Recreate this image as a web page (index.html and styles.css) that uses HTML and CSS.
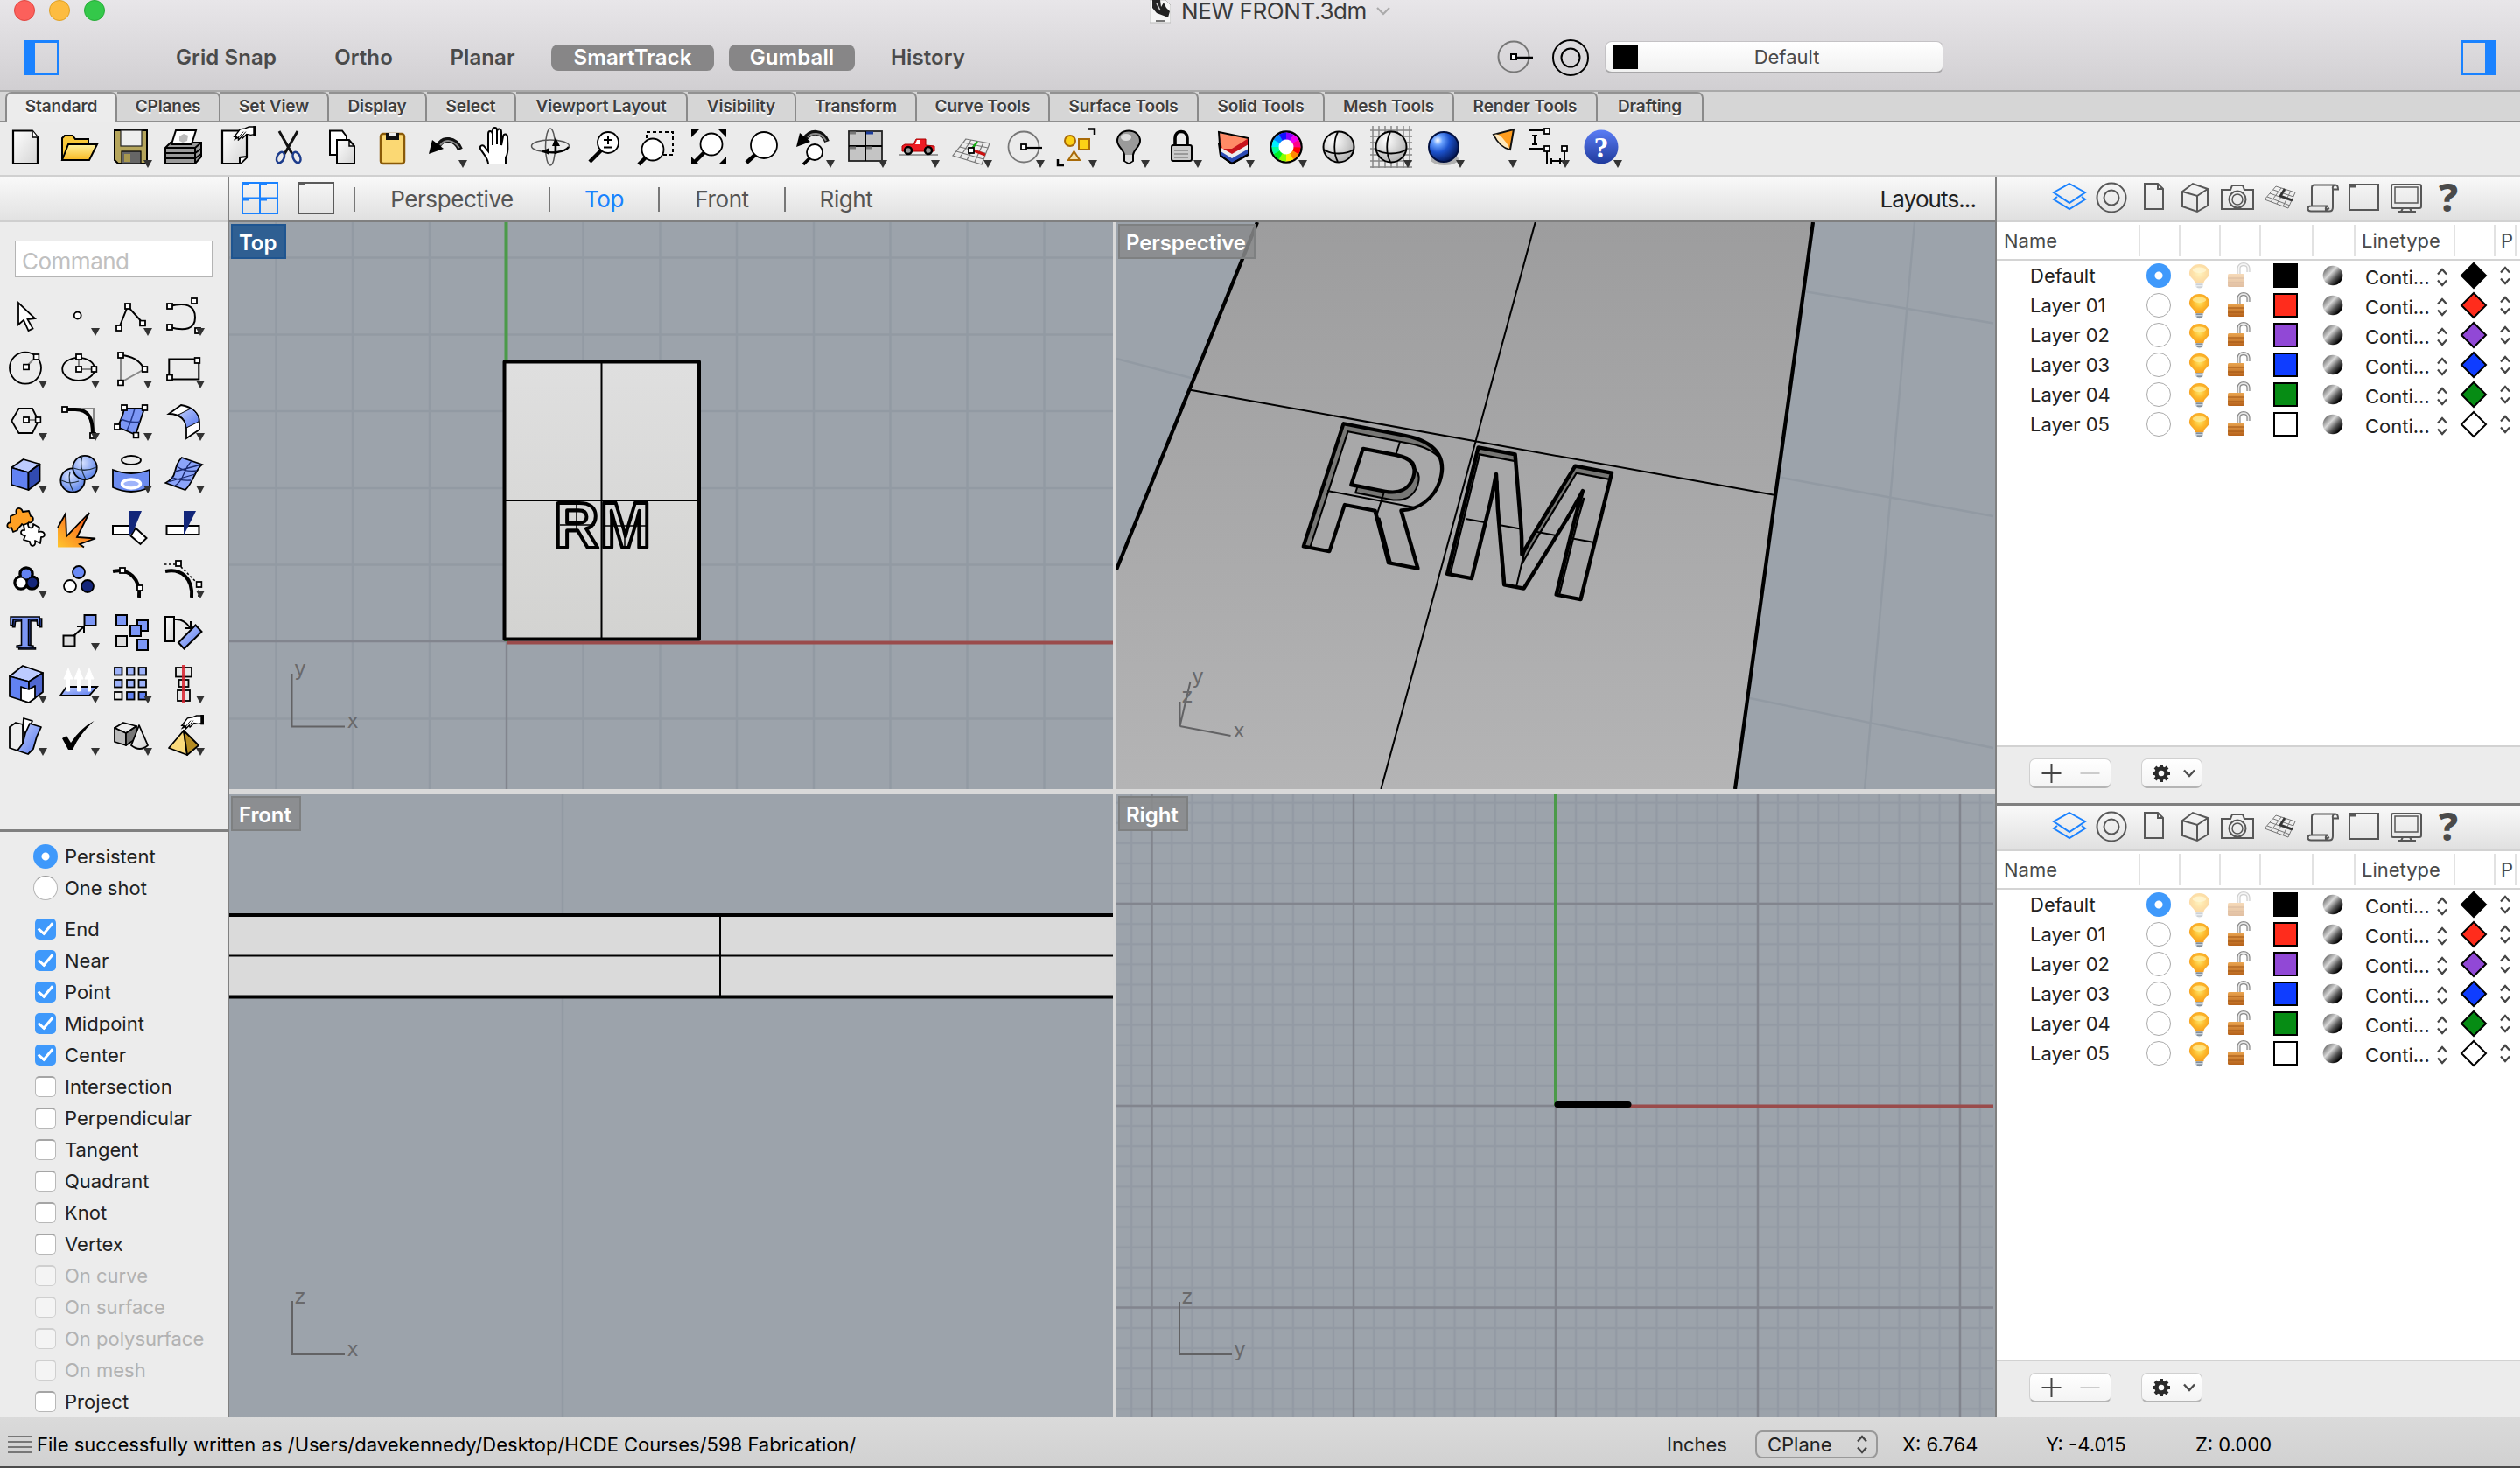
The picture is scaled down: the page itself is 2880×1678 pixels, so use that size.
FILE: index.html
```html
<!DOCTYPE html>
<html lang="en">
<head>
<meta charset="utf-8">
<title>NEW FRONT.3dm</title>
<link rel="stylesheet" href="styles.css">
</head>
<body>
<svg class="defs" width="0" height="0">
  <defs>
    <linearGradient id="gPaper" x1="0" y1="0" x2="1" y2="1"><stop offset="0" stop-color="#fff"/><stop offset="1" stop-color="#d4d4d4"/></linearGradient>
    <linearGradient id="gFolder" x1="0" y1="0" x2="0" y2="1"><stop offset="0" stop-color="#fff3a0"/><stop offset="1" stop-color="#f8b820"/></linearGradient>
    <linearGradient id="gBlue" x1="0" y1="0" x2="1" y2="1"><stop offset="0" stop-color="#c4d1ff"/><stop offset="1" stop-color="#5577ee"/></linearGradient>
    <linearGradient id="gFire" x1="0" y1="1" x2="1" y2="0"><stop offset="0" stop-color="#ffc62e"/><stop offset="1" stop-color="#fa4616"/></linearGradient>
    <radialGradient id="gGray" cx=".35" cy=".3" r=".8"><stop offset="0" stop-color="#fff"/><stop offset="1" stop-color="#aaa"/></radialGradient>
    <radialGradient id="gBall" cx=".3" cy=".28" r=".8"><stop offset="0" stop-color="#fff"/><stop offset=".2" stop-color="#6aa2ff"/><stop offset=".5" stop-color="#1c52cc"/><stop offset="1" stop-color="#02124c"/></radialGradient>
    <radialGradient id="gSph" cx=".4" cy=".3" r=".8"><stop offset="0" stop-color="#d5e0ff"/><stop offset="1" stop-color="#4c78e6"/></radialGradient>
    <linearGradient id="gHelp" x1="0" y1="0" x2="0" y2="1"><stop offset="0" stop-color="#5b7df5"/><stop offset="1" stop-color="#1f3a9c"/></linearGradient>
    <radialGradient id="gBulb" cx=".5" cy=".45" r=".6"><stop offset="0" stop-color="#ffe566"/><stop offset=".5" stop-color="#fdb92c"/><stop offset="1" stop-color="#f39a1c"/></radialGradient>
    <linearGradient id="gLock" x1="0" y1="0" x2="0" y2="1"><stop offset="0" stop-color="#eaa550"/><stop offset="1" stop-color="#b5611a"/></linearGradient>
    <linearGradient id="gMat" x1=".1" y1=".2" x2=".8" y2=".85"><stop offset="0" stop-color="#777"/><stop offset=".35" stop-color="#d8d8d8"/><stop offset=".7" stop-color="#555"/><stop offset="1" stop-color="#000"/></linearGradient>
    <symbol id="tri" viewBox="0 0 60 60"><path d="M44 43H54L49 52Z" fill="#333"/></symbol>
    <symbol id="sq" viewBox="0 0 8 8"><rect x="1" y="1" width="6" height="6" fill="#fff" stroke="#000" stroke-width="1.800"/></symbol>
    <symbol id="bulb" viewBox="0 0 28 32"><path d="M14 2C7 2 2 7 2 13C2 18 8 19 9 25H19C20 19 26 18 26 13C26 7 21 2 14 2Z" fill="url(#gBulb)"/><ellipse cx="14" cy="9" rx="8" ry="3.400" fill="#fff0a0" opacity=".7"/><path d="M9.500 25H18.500V29L14 31.500L9.500 29Z" fill="#c9d3dd"/><path d="M10 26H18M11 29H17" stroke="#6c7884" stroke-width="1.300"/></symbol>
    <symbol id="lock" viewBox="0 0 30 32"><path d="M14.500 16V8C14.500 1.500 25.500 1.500 25.500 8V12" fill="none" stroke="#8a8a8a" stroke-width="4.200"/><path d="M14.500 16V8C14.500 1.500 25.500 1.500 25.500 8V12" fill="none" stroke="#e8e8e8" stroke-width="1.700"/><rect x="2" y="14" width="19" height="15" rx="1.500" fill="url(#gLock)"/><path d="M2 19H21M2 24H21" stroke="#a05514" stroke-width="1"/></symbol>
    <symbol id="mat" viewBox="0 0 24 26"><circle cx="12" cy="13" r="11.300" fill="url(#gMat)"/></symbol>
    <symbol id="updn" viewBox="0 0 14 24"><path d="M2 8.500L7 3L12 8.500M2 15.500L7 21L12 15.500" fill="none" stroke="#444" stroke-width="2.200"/></symbol>
    <symbol id="dia" viewBox="0 0 32 32"><path d="M16 2L30 16L16 30L2 16Z" fill="currentColor" stroke="#000" stroke-width="2"/></symbol>
    <symbol id="gear" viewBox="0 0 24 24"><circle cx="12" cy="12" r="5.500" fill="none" stroke="#2a2a2a" stroke-width="4.500"/><path d="M12 2V6M12 18V22M2 12H6M18 12H22M5 5L8 8M16 16L19 19M5 19L8 16M16 8L19 5" stroke="#2a2a2a" stroke-width="4"/></symbol>
    <symbol id="chev" viewBox="0 0 16 12"><path d="M2 2.500L8 9L14 2.500" fill="none" stroke="#4c4c4c" stroke-width="2.400"/></symbol>
    <symbol id="hand" viewBox="0 0 30 18"><path d="M29 1H21L16 3L10 4L3 13L6 13L4 16L8 14L8 17L12 13L13 15L18 10L23 11L29 10Z" fill="#fff" stroke="#000" stroke-width="1.500"/><path d="M26 0H30V12H26Z"/><path d="M14 7L8 14M17 7L12 13" stroke="#000" stroke-width="1"/></symbol>
    <symbol id="ptabs" viewBox="0 0 480 48">
      <g fill="none" stroke="#575757" stroke-width="2">
        <path d="M24 8L42 18L24 30L6 18ZM10 23L6 26L24 37L42 26L38 23" stroke="#1a82ff"/>
        <circle cx="72" cy="24" r="16.500"/><circle cx="72" cy="24" r="8.500"/>
        <path d="M110 8H125L131 14V37H110ZM125 8V14H131"/>
        <path d="M153 17L165 8L182 14V33L170 40L153 34ZM153 17L170 22L182 14M170 22V40"/>
        <path d="M198 15H208L210 10H222L224 15H234V37H198Z"/><circle cx="216" cy="26" r="9.500"/><circle cx="216" cy="26" r="6" stroke-width="1.500"/>
        <g stroke-width="1" stroke="#777"><path d="M260 11L282 18L274 36L247 26ZM257 15L280 23M253 19L278 28M250 23L276 33M266 13L254 29M271 15L261 31M277 16L268 34"/></g><path d="M270 14L265 22L279 27" stroke="#333" stroke-width="2.500"/>
        <path d="M301 34V12.500Q301 9.500 304 9.500H328Q331 9.500 331 14.500H325M325 14.500Q324 10 328 9.500M325 14.500V35Q325 39.500 321 39.500H300Q296.500 39.500 296.500 36.500Q296.500 33.500 300 33.500H320M320 33.500Q316 34 317 38L321 36"/>
        <rect x="344" y="9" width="33" height="29"/><path d="M344 11H352" stroke-width="3"/>
        <rect x="392" y="9" width="34" height="27" rx="2"/><rect x="396" y="12" width="26" height="18" stroke-width="1.500"/><path d="M405 36L403 40H415L413 36M399 40H420"/>
      </g>
      <text x="457" y="40" text-anchor="middle" class="q">?</text>
    </symbol>
  </defs>
</svg>

<div class="window">
  <header class="titlebar">
    <div class="lights"><i class="red"></i><i class="yel"></i><i class="grn"></i></div>
    <div class="doc">
      <svg width="24" height="27" viewBox="0 0 24 27"><path d="M0 0H18L24 6V26H0Z" fill="#f6f6f6" stroke="#bbb"/><path d="M3 0H12L13 8L16 3L19 9L23 13L21 20L16 18L8 15L3 9Z" fill="#222"/><path d="M8 4L12 12" stroke="#ccc" stroke-width="1.500"/><path d="M7 24H17" stroke="#777" stroke-width="2"/></svg>
      <span>NEW FRONT.3dm</span>
      <svg width="18" height="12" viewBox="0 0 18 12"><path d="M2 2L9 9L16 2" fill="none" stroke="#aaa" stroke-width="2.200"/></svg>
    </div>
  </header>
  <div class="modebar">
    <svg class="side-l" width="40" height="40" viewBox="0 0 40 40"><path d="M1.500 1.500H38.500V38.500H1.500Z" fill="none" stroke="#1a82ff" stroke-width="3"/><path d="M0 0H12V40H0Z" fill="#1a82ff"/></svg>
    <nav class="modes">
      <span class="w165">Grid Snap</span><span class="w115">Ortho</span><span class="w123">Planar</span><span class="w186 on">SmartTrack</span><span class="w144 on">Gumball</span><span class="w133">History</span>
    </nav>
    <div class="layerpick">
      <svg width="44" height="44" viewBox="0 0 44 44"><circle cx="20" cy="21" r="17.500" fill="none" stroke="#777" stroke-width="2"/><path d="M22 22H42" stroke="#000" stroke-width="2.500"/><rect x="17" y="18" width="6" height="6" fill="#fff" stroke="#000" stroke-width="2"/></svg>
      <svg width="44" height="44" viewBox="0 0 44 44"><circle cx="22" cy="22" r="20" fill="none" stroke="#000" stroke-width="2"/><circle cx="22" cy="22" r="10.500" fill="none" stroke="#000" stroke-width="2"/></svg>
      <div class="field"><i></i><span>Default</span></div>
    </div>
    <svg class="side-r" width="40" height="40" viewBox="0 0 40 40"><path d="M1.500 1.500H38.500V38.500H1.500Z" fill="none" stroke="#1a82ff" stroke-width="3"/><path d="M28 0H40V40H28Z" fill="#1a82ff"/></svg>
  </div>

  <nav class="tabs">
    <span class="t128 active">Standard</span><span class="t118">CPlanes</span><span class="t124">Set View</span><span class="t112">Display</span><span class="t102">Select</span><span class="t196">Viewport Layout</span><span class="t124">Visibility</span><span class="t138">Transform</span><span class="t152">Curve Tools</span><span class="t170">Surface Tools</span><span class="t144">Solid Tools</span><span class="t148">Mesh Tools</span><span class="t164">Render Tools</span><span class="t121">Drafting</span>
  </nav>

  <div class="toolbar">
    <svg viewBox="0 0 60 60"><path d="M15 9.500H37L43 17V47H15Z" fill="url(#gPaper)" stroke="#000" stroke-width="2.200"/><path d="M37 9.500V17H43" fill="#fff" stroke="#000" stroke-width="1.500"/></svg>
    <svg viewBox="0 0 60 60"><path d="M11 43V18L14 15H23L26 19H41V25" fill="#f9c93a" stroke="#000" stroke-width="2"/><path d="M11 43L18 25H51L42 43Z" fill="url(#gFolder)" stroke="#000" stroke-width="2"/></svg>
    <svg viewBox="0 0 60 60"><path d="M11 9H48V47H15L11 43Z" fill="#b5a55b" stroke="#000" stroke-width="2"/><rect x="18" y="9" width="24" height="18" fill="#eee" stroke="#222" stroke-width="1.200"/><rect x="19" y="33" width="22" height="14" fill="#666" stroke="#000" stroke-width="1.200"/><rect x="22" y="36" width="7" height="9" fill="#a89850"/><use href="#tri"/></svg>
    <svg viewBox="0 0 60 60"><path d="M9 29L15 23H50V39L43 47H9Z" fill="#999" stroke="#000" stroke-width="2"/><path d="M9 29H43V47M43 29L50 23M9 35H43L50 30M9 41H43L50 36" fill="none" stroke="#000" stroke-width="2"/><path d="M16 25L21 9H44L39 25Z" fill="#fff" stroke="#000" stroke-width="2"/><path d="M25 16L30 13L35 15L34 21L29 23L25 21Z" fill="#bbb"/></svg>
    <svg viewBox="0 0 60 60"><path d="M14 9.500H42V40L35 47H14Z" fill="url(#gPaper)" stroke="#000" stroke-width="2.200"/><path d="M42 39L34 40V47" fill="#fff" stroke="#000" stroke-width="2"/><use href="#hand" x="25" y="4" width="28" height="17"/></svg>
    <svg viewBox="0 0 60 60"><path d="M19 10L31 31L34 36M40 10L28 31L25 36" fill="none" stroke="#111" stroke-width="3"/><ellipse cx="20.500" cy="40" rx="4" ry="6.500" transform="rotate(25 20.500 40)" fill="none" stroke="#1c3c8c" stroke-width="2.500"/><ellipse cx="39" cy="40" rx="4" ry="6.500" transform="rotate(-25 39 40)" fill="none" stroke="#1c3c8c" stroke-width="2.500"/></svg>
    <svg viewBox="0 0 60 60"><path d="M17 9.500H31L36 16V37H17Z" fill="#fff" stroke="#000" stroke-width="2"/><path d="M25 20H39L45 27V47H25Z" fill="url(#gPaper)" stroke="#000" stroke-width="2"/><path d="M39 20V27H45" fill="none" stroke="#000" stroke-width="1.500"/></svg>
    <svg viewBox="0 0 60 60"><rect x="15" y="13" width="27" height="34" rx="3" fill="#fbd873" stroke="#8a5a08" stroke-width="2.500"/><path d="M21 12H36V20H21Z" fill="#111"/><path d="M25 12H32V16H25Z" fill="#eee"/></svg>
    <svg viewBox="0 0 60 60"><path d="M21 27C26 17 40 17 46 31" fill="none" stroke="#111" stroke-width="6"/><path d="M23 26C28 19 38 19 45 29" fill="none" stroke="#888" stroke-width="2"/><path d="M10 36L14 20L27 30Z"/><use href="#tri"/></svg>
    <svg viewBox="0 0 60 60"><path d="M18 47C17 39 12 36 9 30C8 26 12 25 14 28L18 33V13C18 9 22 9 23 13V26V9C23 5 28 5 28 9V25V10C29 6 33 7 33 11V26L35 16C36 12 40 13 40 17C40 26 42 35 38 40V47" fill="#fff" stroke="#000" stroke-width="2"/></svg>
    <svg viewBox="0 0 60 60"><ellipse cx="29" cy="28" rx="5.500" ry="21" fill="none" stroke="#555" stroke-width="1.500"/><ellipse cx="29" cy="27" rx="21.500" ry="7" fill="none" stroke="#555" stroke-width="1.500"/><path d="M20 33C32 36 45 34 50 28" fill="none" stroke="#000" stroke-width="2.200"/><path d="M19 33L28 29V37ZM35 17L31 27H40Z"/><path d="M35 25V36" stroke="#000" stroke-width="2.500"/></svg>
    <svg viewBox="0 0 60 60"><path d="M27 32L14 45" stroke="#000" stroke-width="4.500"/><circle cx="35" cy="23" r="12" fill="#fff" stroke="#000" stroke-width="1.800"/><path d="M30 20H40M35 15V25M30 28.500H40" stroke="#000" stroke-width="2"/></svg>
    <svg viewBox="0 0 60 60"><rect x="19" y="11" width="30" height="26" fill="none" stroke="#000" stroke-width="2" stroke-dasharray="4 3"/><path d="M18 40L10 48" stroke="#000" stroke-width="4.500"/><circle cx="26" cy="31" r="12.500" fill="#fff" stroke="#000" stroke-width="1.800"/></svg>
    <svg viewBox="0 0 60 60"><path d="M10 8H19L10 17ZM50 8H41L50 17ZM10 48V39L19 48ZM50 48H41L50 39Z"/><path d="M25 34L14 45" stroke="#000" stroke-width="4.500"/><circle cx="33" cy="25" r="12.500" fill="#fff" stroke="#000" stroke-width="1.800"/></svg>
    <svg viewBox="0 0 60 60"><path d="M24 36L13 46" stroke="#000" stroke-width="4.500"/><circle cx="33" cy="26" r="15" fill="#fff" stroke="#000" stroke-width="1.800"/></svg>
    <svg viewBox="0 0 60 60"><path d="M20 19C26 9 40 9 45 22" fill="none" stroke="#111" stroke-width="6"/><path d="M23 17C28 11 38 11 44 21" fill="none" stroke="#888" stroke-width="2"/><path d="M10 28L14 12L26 22Z"/><path d="M26 40L18 48" stroke="#000" stroke-width="3.500"/><circle cx="31" cy="34" r="9" fill="#fff" stroke="#000" stroke-width="1.800"/><use href="#tri"/></svg>
    <svg viewBox="0 0 60 60"><rect x="10" y="10" width="38" height="34" fill="#c4c4c4" stroke="#222" stroke-width="1.800"/><path d="M29 10V44M10 27H48" stroke="#000" stroke-width="2"/><path d="M11 12H18M11 29H18M30 29H37" stroke="#777" stroke-width="3"/><path d="M30 12H38" stroke="#1c3c9c" stroke-width="3"/><use href="#tri"/></svg>
    <svg viewBox="0 0 60 60"><path d="M8 37H52" stroke="#999" stroke-width="2"/><path d="M11 33V27L14 25H24L27 19H38V26L48 27V33Z" fill="#ee1c24" stroke="#a00" stroke-width="1"/><path d="M28 20H32V25H26Z" fill="#fff"/><circle cx="18" cy="32" r="4" fill="#999" stroke="#000" stroke-width="2.500"/><circle cx="41" cy="32" r="4" fill="#999" stroke="#000" stroke-width="2.500"/><use href="#tri"/></svg>
    <svg viewBox="0 0 60 60"><path d="M24 19L51 24L42 48L9 38ZM21 23L49 29M17 28L46 35M13 33L44 42M30 20L17 40M37 21L25 43M44 23L34 45" fill="none" stroke="#777" stroke-width="1.200"/><path d="M30 31L37 22" stroke="#1a1" stroke-width="2.500"/><path d="M30 31L46 37" stroke="#c11" stroke-width="3"/><use href="#sq" x="26" y="28" width="8" height="8"/><use href="#tri"/></svg>
    <svg viewBox="0 0 60 60"><circle cx="30" cy="28" r="17.500" fill="none" stroke="#777" stroke-width="1.800"/><path d="M32 29H51" stroke="#000" stroke-width="2.200"/><use href="#sq" x="26" y="24" width="8" height="8"/><use href="#tri"/></svg>
    <svg viewBox="0 0 60 60"><circle cx="23" cy="21" r="6" fill="#fcd116" stroke="#a86a08" stroke-width="2"/><rect x="33" y="19" width="12" height="12" fill="#fcd116" stroke="#a86a08" stroke-width="2"/><path d="M27.500 33L34 43H21Z" fill="#f2e2b0" stroke="#a86a08" stroke-width="2"/><path d="M44 7.500H51V14M9 42V49H16" fill="none" stroke="#000" stroke-width="2.500"/><use href="#tri"/></svg>
    <svg viewBox="0 0 60 60"><path d="M30 9.500C22 9.500 17 15 17 21C17 28 24 30 25 37V44L30 47L35 44V37C36 30 43 28 43 21C43 15 38 9.500 30 9.500Z" fill="#9a9a9a" stroke="#000" stroke-width="2"/><ellipse cx="27" cy="17" rx="6" ry="4" fill="#ddd"/><path d="M26 37H34V44L30 46L26 44Z" fill="#ddd"/><use href="#tri"/></svg>
    <svg viewBox="0 0 60 60"><path d="M23 27V18C23 8 37 8 37 18V27" fill="none" stroke="#000" stroke-width="3.600"/><rect x="19" y="26" width="23" height="18" rx="2" fill="#ccc" stroke="#000" stroke-width="2"/><path d="M22 32H38M22 36H38M22 40H38" stroke="#888" stroke-width="1.500"/><use href="#tri"/></svg>
    <svg viewBox="0 0 60 60"><path d="M13 24L15 38L28 47L47 36V18Z" fill="#2c4bb4" stroke="#000" stroke-width="2"/><path d="M13 19L15 33L28 41L47 30V18Z" fill="#eee"/><path d="M13 14L16 29L28 36L47 25V18Z" fill="#c8131b"/><path d="M13 12L47 18L28 30L17 30Z" fill="#ff8a66"/><path d="M13 11L47 18V37L28 47L15 38Z" fill="none" stroke="#000" stroke-width="2"/><use href="#tri"/></svg>
    <svg viewBox="0 0 60 60"><circle cx="30" cy="28" r="17.500" fill="#fff" stroke="#000" stroke-width="2.500"/><g class="wheel"><circle cx="30" cy="28" r="12.500" stroke="#f00"/><circle cx="30" cy="28" r="12.500" stroke="#f80" transform="rotate(30 30 28)"/><circle cx="30" cy="28" r="12.500" stroke="#fe0" transform="rotate(60 30 28)"/><circle cx="30" cy="28" r="12.500" stroke="#8f0" transform="rotate(90 30 28)"/><circle cx="30" cy="28" r="12.500" stroke="#0e2" transform="rotate(120 30 28)"/><circle cx="30" cy="28" r="12.500" stroke="#0f9" transform="rotate(150 30 28)"/><circle cx="30" cy="28" r="12.500" stroke="#0ef" transform="rotate(180 30 28)"/><circle cx="30" cy="28" r="12.500" stroke="#08f" transform="rotate(210 30 28)"/><circle cx="30" cy="28" r="12.500" stroke="#11f" transform="rotate(240 30 28)"/><circle cx="30" cy="28" r="12.500" stroke="#80f" transform="rotate(270 30 28)"/><circle cx="30" cy="28" r="12.500" stroke="#e0e" transform="rotate(300 30 28)"/><circle cx="30" cy="28" r="12.500" stroke="#f08" transform="rotate(330 30 28)"/></g><use href="#tri"/></svg>
    <svg viewBox="0 0 60 60"><circle cx="30" cy="28" r="17.500" fill="url(#gGray)" stroke="#000" stroke-width="2"/><path d="M29 11C24 20 24 36 29 45M13 31C22 37 38 37 47 31" fill="none" stroke="#000" stroke-width="1.800"/></svg>
    <svg viewBox="0 0 60 60"><path d="M9 4V52M16 4V52M23 4V52M30 4V52M37 4V52M44 4V52M51 4V52M6 9H54M6 16H54M6 23H54M6 30H54M6 37H54M6 44H54M6 51H54" stroke="#888" stroke-width="1.500"/><circle cx="30" cy="28" r="17.500" fill="url(#gGray)" stroke="#000" stroke-width="2"/><path d="M29 11C24 20 24 36 29 45M13 31C22 37 38 37 47 31" fill="none" stroke="#000" stroke-width="1.800"/><use href="#tri"/></svg>
    <svg viewBox="0 0 60 60"><ellipse cx="31" cy="42" rx="16" ry="7" fill="#000" opacity=".25"/><circle cx="30" cy="28" r="17" fill="url(#gBall)" stroke="#021040" stroke-width="2"/><use href="#tri"/></svg>
    <svg viewBox="0 0 60 60"><path d="M27 14L50 8L46 31Q34 28 27 14Z" fill="#ff9d1e" stroke="#111" stroke-width="2"/><path d="M28 14Q33 12 39 20Q45 27 45 30Q34 27 28 14Z" fill="#ffe9bd"/><use href="#tri"/></svg>
    <svg viewBox="0 0 60 60"><path d="M8 9H24M8 30H24M14 14V26M11 15H17M11 25H17M28 33V48M48 33V48M31 44H45M33 41V47M43 41V47" fill="none" stroke="#000" stroke-width="2"/><use href="#sq" x="24" y="6" width="8" height="8"/><use href="#sq" x="24" y="26" width="8" height="8"/><use href="#sq" x="44" y="26" width="8" height="8"/><use href="#tri"/></svg>
    <svg viewBox="0 0 60 60"><circle cx="30" cy="28" r="19.500" fill="url(#gHelp)"/><text x="30" y="40" text-anchor="middle" class="help">?</text><use href="#tri"/></svg>
  </div>

  <main class="body">
    <aside class="left">
      <div class="strip"></div>
      <div class="cmd">Command</div>
      <div class="tools">
        <svg viewBox="0 0 60 60"><path d="M21 14V39L27 34L32.500 46L37.500 43.500L31.500 33L40 32Z" fill="#fff" stroke="#000" stroke-width="1.800"/></svg>
        <svg viewBox="0 0 60 60"><circle cx="28.700" cy="28.600" r="4" fill="#fff" stroke="#000" stroke-width="1.800"/><use href="#tri"/></svg>
        <svg viewBox="0 0 60 60"><path d="M16 43L26 18L43 37" fill="none" stroke="#000" stroke-width="2"/><use href="#sq" x="12" y="39" width="8" height="8"/><use href="#sq" x="22" y="14" width="8" height="8"/><use href="#sq" x="39" y="33.500" width="8" height="8"/><use href="#tri"/></svg>
        <svg viewBox="0 0 60 60"><path d="M14 18C32 13 43 17 43 31C43 44 32 47 14 42" fill="none" stroke="#000" stroke-width="2"/><use href="#sq" x="10" y="14" width="8" height="8"/><use href="#sq" x="38" y="8" width="8" height="8"/><use href="#sq" x="10" y="38" width="8" height="8"/><use href="#sq" x="42" y="42" width="8" height="8"/><use href="#tri"/></svg>

        <svg viewBox="0 0 60 60"><circle cx="29" cy="28.600" r="18" fill="none" stroke="#000" stroke-width="1.800"/><path d="M30 27L41 16" stroke="#888" stroke-width="2"/><use href="#sq" x="26" y="23.500" width="8" height="8"/><use href="#sq" x="37.500" y="12" width="8" height="8"/><use href="#tri"/></svg>
        <svg viewBox="0 0 60 60"><ellipse cx="29.700" cy="29.800" rx="18.500" ry="13" fill="none" stroke="#000" stroke-width="1.800"/><path d="M30 16V30H46" fill="none" stroke="#888" stroke-width="2"/><use href="#sq" x="26" y="12" width="8" height="8"/><use href="#sq" x="26" y="26" width="8" height="8"/><use href="#sq" x="43.500" y="26" width="8" height="8"/><use href="#tri"/></svg>
        <svg viewBox="0 0 60 60"><path d="M18 14V45L45 30" fill="none" stroke="#888" stroke-width="2"/><path d="M18 14C32 15 40 20 45 30" fill="none" stroke="#000" stroke-width="2"/><use href="#sq" x="14" y="10" width="8" height="8"/><use href="#sq" x="14" y="41.500" width="8" height="8"/><use href="#sq" x="41.500" y="26" width="8" height="8"/><use href="#tri"/></svg>
        <svg viewBox="0 0 60 60"><rect x="13.300" y="18.500" width="34" height="23" fill="none" stroke="#000" stroke-width="2"/><use href="#sq" x="41.500" y="16" width="8" height="8"/><use href="#sq" x="10" y="35.500" width="8" height="8"/><use href="#tri"/></svg>

        <svg viewBox="0 0 60 60"><path d="M13.300 29L21.500 15H37L44 29L37 43H21.500Z" fill="none" stroke="#000" stroke-width="1.800"/><path d="M30 28H43" stroke="#888" stroke-width="2"/><use href="#sq" x="26" y="24" width="8" height="8"/><use href="#sq" x="39.500" y="24" width="8" height="8"/><use href="#tri"/></svg>
        <svg viewBox="0 0 60 60"><path d="M14 15H47V45" fill="none" stroke="#888" stroke-width="2"/><path d="M14 16H26C42 16 46 27 46 45" fill="none" stroke="#000" stroke-width="4"/><use href="#sq" x="10" y="12" width="8" height="8"/><use href="#sq" x="42" y="42" width="8" height="8"/><use href="#tri"/></svg>
        <svg viewBox="0 0 60 60"><path d="M22 15H45L35 45Q24 40 14 36Q20 26 22 15Z" fill="#7c97f5" stroke="#000" stroke-width="1.800"/><path d="M34 15Q30 30 25 40M18 27Q30 32 40 30" fill="none" stroke="#24398c" stroke-width="1.500"/><use href="#sq" x="18" y="10" width="8" height="8"/><use href="#sq" x="41.500" y="10" width="8" height="8"/><use href="#sq" x="31.500" y="41.500" width="8" height="8"/><use href="#sq" x="10" y="32" width="8" height="8"/><use href="#tri"/></svg>
        <svg viewBox="0 0 60 60"><path d="M13 21L27 11C40 13 48 21 48 31V39L33 49V38C33 29 26 21 13 21Z" fill="#fff" stroke="#000" stroke-width="1.800"/><path d="M24 22L38 15C45 19 48 25 47 30L33 37C32 29 29 25 24 22Z" fill="url(#gBlue)" stroke="#000" stroke-width="1"/><use href="#tri"/></svg>

        <svg viewBox="0 0 60 60"><g stroke="#000" stroke-width="1.800" stroke-linejoin="round"><path d="M13 22.500L26.700 13L45.500 18.500L32.500 28Z" fill="#bccbff"/><path d="M13 22.500L32.500 28V48L13 42Z" fill="#6282f2"/><path d="M32.500 28L45.500 18.500V38L32.500 48Z" fill="#314bb0"/></g><use href="#tri"/></svg>
        <svg viewBox="0 0 60 60"><g stroke="#000" stroke-width="1.800"><circle cx="23" cy="37" r="13.700" fill="url(#gSph)"/><circle cx="37" cy="22.500" r="13.700" fill="url(#gSph)"/></g><path d="M20 27Q17 38 24 50M10 37Q20 42 30 38M34 9Q30 22 38 36M24 23Q38 28 50 22" fill="none" stroke="#234" stroke-width="1.300"/><use href="#tri"/></svg>
        <svg viewBox="0 0 60 60"><ellipse cx="30" cy="14" rx="11" ry="5" fill="none" stroke="#000" stroke-width="1.800"/><path d="M9 25Q30 33 51 25V45Q30 55 9 45Z" fill="#6c8cf0" stroke="#000" stroke-width="1.800"/><ellipse cx="30" cy="41" rx="10.500" ry="5" fill="#9fb4fa" stroke="#fff" stroke-width="3.500"/><use href="#tri"/></svg>
        <svg viewBox="0 0 60 60"><path d="M27.700 11L51 19Q47 22 42 32Q37 43 31.700 48L9.300 40Q18 36 20 27Q22 17 27.700 11Z" fill="#8ba4fa" stroke="#000" stroke-width="1.800"/><path d="M39 15Q34 20 30 30Q26 40 20 43M22 21Q32 28 45 26M15 33Q27 38 38 37M50 19L20 27M43 30L12 39" fill="none" stroke="#18276a" stroke-width="1.300"/><use href="#tri"/></svg>

        <svg viewBox="0 0 60 60"><g stroke="#000" stroke-width="1.800" stroke-linejoin="round"><path d="M12 18L19 15C16 9 24 6 26 13L33 12L35 18C40 18 38 27 33 25L30 30L25 27C23 31 20 31 20 34L15 36L13 31C8 34 6 26 12 25Z" fill="#ffa024"/><path d="M27 28L32 26C31 33 39 33 38 27L45 31L44 36C51 34 54 42 47 42L46 49L40 46C42 53 34 54 34 47L27 45L29 40C23 41 22 33 28 34Z" fill="#fff"/></g></svg>
        <svg viewBox="0 0 60 60"><path d="M6 53.500V31L15 15L16 41L42 14L28 42L49 43.500L31 50L36 53.500Z" fill="url(#gFire)"/><path d="M6 31L15 15L16 41L42 14L28 42L49 43.500L31 50L36 53.500" fill="none" stroke="#000" stroke-width="1.800"/></svg>
        <svg viewBox="0 0 60 60"><g fill="#fff" stroke="#000" stroke-width="2"><path d="M9 29H28V39H9Z"/><path d="M35 31.500L47.500 43L40.500 50L29.500 40.500Z"/></g><path d="M28 12H42L32 36L28 40Z" fill="#12267a"/></svg>
        <svg viewBox="0 0 60 60"><path d="M10.500 29H47.500V39H10.500Z" fill="#fff" stroke="#000" stroke-width="2"/><path d="M30 12H44L30 40Z" fill="#12267a"/></svg>

        <svg viewBox="0 0 60 60"><g stroke="#000" stroke-width="5.500"><circle cx="30" cy="24" r="6"/><circle cx="24" cy="34" r="6"/><circle cx="36.500" cy="34" r="6"/></g><circle cx="24" cy="34" r="5.500" fill="#fff"/><circle cx="37" cy="34" r="5.500" fill="#14267a"/><circle cx="30" cy="24" r="6" fill="#6282f2" stroke="#000" stroke-width="1"/><use href="#tri"/></svg>
        <svg viewBox="0 0 60 60"><g stroke="#000" stroke-width="1.800"><circle cx="30" cy="22" r="7" fill="#6a8af5"/><circle cx="20" cy="38" r="7" fill="#fff"/><circle cx="40" cy="38" r="7" fill="#14267a"/></g></svg>
        <svg viewBox="0 0 60 60"><path d="M9 21C27 17 41 29 39 51" fill="none" stroke="#000" stroke-width="4"/><use href="#sq" x="16" y="16" width="8" height="8"/><use href="#sq" x="36" y="36" width="8" height="8"/></svg>
        <svg viewBox="0 0 60 60"><path d="M9 21C27 17 41 29 39 51" fill="none" stroke="#000" stroke-width="4"/><path d="M8 13H24L47 36V50" fill="none" stroke="#000" stroke-width="1.500" stroke-dasharray="2.500 2.500"/><use href="#sq" x="20" y="8" width="8" height="8"/><use href="#sq" x="43.500" y="32" width="8" height="8"/><use href="#tri"/></svg>

        <svg viewBox="0 0 60 60"><text x="31" y="49.500" text-anchor="middle" class="tee shade">T</text><text x="28.500" y="48" text-anchor="middle" class="tee">T</text></svg>
        <svg viewBox="0 0 60 60"><rect x="12.500" y="34.500" width="13" height="12" fill="#ddd" stroke="#000" stroke-width="2"/><rect x="36.500" y="11" width="13" height="12" fill="#7c97f5" stroke="#000" stroke-width="2"/><path d="M24 35L35 25M28 24H36V31" fill="none" stroke="#000" stroke-width="2"/><use href="#tri"/></svg>
        <svg viewBox="0 0 60 60"><g fill="#7c97f5" stroke="#000" stroke-width="2"><rect x="13" y="11" width="12" height="12"/><rect x="37" y="17" width="12" height="12"/><rect x="29" y="23" width="12" height="12"/><rect x="37" y="39" width="12" height="12"/><rect x="13" y="35" width="12" height="12" fill="#ddd"/></g></svg>
        <svg viewBox="0 0 60 60"><rect x="9" y="13" width="10" height="28" fill="url(#gPaper)" stroke="#000" stroke-width="2"/><path d="M20 16Q30 15 37 25M31 26H38V18" fill="none" stroke="#000" stroke-width="2"/><path d="M43.500 22.500L50.500 30L30.500 49.500L24 42.500Z" fill="url(#gBlue)" stroke="#000" stroke-width="2"/></svg>

        <svg viewBox="0 0 60 60"><g stroke="#000" stroke-width="1.800" stroke-linejoin="round"><path d="M11 21L26 9L49 17L33 27Z" fill="#bccbff"/><path d="M11 21L33 27V51L11 44Z" fill="#6282f2"/><path d="M33 27L49 17V39L33 51Z" fill="#5068d0"/><path d="M24 48V33L33 36L40 32V46L33 51Z" fill="#fff"/></g><use href="#tri"/></svg>
        <svg viewBox="0 0 60 60"><path d="M9 43L16 33H51L42 43Z" fill="url(#gBlue)" stroke="#000" stroke-width="1.800"/><path d="M16.500 38V24H13L18 12L23 24H19.500V38ZM28.500 38V24H25L30 12L35 24H31.500V38ZM40.500 38V24H37L42 12L47 24H43.500V38Z" fill="#fff" stroke="#fff"/><use href="#tri"/></svg>
        <svg viewBox="0 0 60 60"><g fill="#9db2fa" stroke="#000" stroke-width="1.800"><rect x="11" y="11" width="8.500" height="8.500"/><rect x="25" y="11" width="8.500" height="8.500"/><rect x="38.500" y="11" width="8.500" height="8.500"/><rect x="11" y="25" width="8.500" height="8.500"/><rect x="25" y="25" width="8.500" height="8.500"/><rect x="38.500" y="25" width="8.500" height="8.500"/><rect x="11" y="39" width="8.500" height="8.500" fill="#eee"/><rect x="25" y="39" width="8.500" height="8.500" fill="#6282f2"/><rect x="38.500" y="39" width="8.500" height="8.500" fill="#6282f2"/></g><use href="#tri"/></svg>
        <svg viewBox="0 0 60 60"><g fill="#e8e8e8" stroke="#000" stroke-width="1.800"><rect x="21" y="11" width="18" height="10.500"/><rect x="24.500" y="25" width="11" height="8"/><rect x="23" y="37" width="14" height="12"/></g><path d="M30 8V52" stroke="#d8202c" stroke-width="4" opacity=".85"/><use href="#tri"/></svg>

        <svg viewBox="0 0 60 60"><g stroke="#000" stroke-width="1.800" stroke-linejoin="round"><path d="M26 22L27 9L37 12L30 28Z" fill="#fff"/><path d="M11 19L18 14L26 16V40L20 46L11 43Z" fill="#eee"/><path d="M34 15L47 19L42 30L38 44L32 50L20 46L26 38L29 26Z" fill="url(#gBlue)"/></g><use href="#tri"/></svg>
        <svg viewBox="0 0 60 60"><path d="M11 32L16 29L21 37Q32 20 47.500 12Q31 27 23 45H18Z"/><use href="#tri"/></svg>
        <svg viewBox="0 0 60 60"><g stroke="#000" stroke-width="1.800" stroke-linejoin="round"><path d="M11 20L21 14L36 18L24 26Z" fill="#eee"/><path d="M11 20L24 26V40L11 36Z" fill="#bbb"/><path d="M24 26L36 18V32L24 40Z" fill="#777"/><path d="M39 17L49 40Q40 48 30 40Z" fill="url(#gPaper)"/></g><use href="#tri"/></svg>
        <svg viewBox="0 0 60 60"><g stroke="#000" stroke-width="1.800" stroke-linejoin="round"><path d="M30 23L13 43L34 51Z" fill="#fbdb7c"/><path d="M30 23L34 51L47 40Z" fill="#b58c22"/></g><use href="#hand" x="25" y="5" width="28" height="17"/><use href="#tri"/></svg>
      </div>
      <div class="snaps">
        <div class="radio on"><i></i>Persistent</div>
        <div class="radio"><i></i>One shot</div>
        <div class="chk on first"><i></i>End</div>
        <div class="chk on"><i></i>Near</div>
        <div class="chk on"><i></i>Point</div>
        <div class="chk on"><i></i>Midpoint</div>
        <div class="chk on"><i></i>Center</div>
        <div class="chk"><i></i>Intersection</div>
        <div class="chk"><i></i>Perpendicular</div>
        <div class="chk"><i></i>Tangent</div>
        <div class="chk"><i></i>Quadrant</div>
        <div class="chk"><i></i>Knot</div>
        <div class="chk"><i></i>Vertex</div>
        <div class="chk off"><i></i>On curve</div>
        <div class="chk off"><i></i>On surface</div>
        <div class="chk off"><i></i>On polysurface</div>
        <div class="chk off"><i></i>On mesh</div>
        <div class="chk"><i></i>Project</div>
      </div>
    </aside>

    <section class="center">
      <div class="viewbar">
        <svg class="four" width="42" height="38" viewBox="0 0 42 38"><path d="M1 1H41V36H1ZM21 1V36M1 18.500H41" fill="none" stroke="#1a82ff" stroke-width="2"/><path d="M1 2.500H9M21 2.500H29M1 20H9M21 20H29" stroke="#1a82ff" stroke-width="3"/></svg>
        <svg width="42" height="38" viewBox="0 0 42 38"><path d="M1 1H41V36H1Z" fill="none" stroke="#5a5a5a" stroke-width="2"/><path d="M1 2.500H9" stroke="#5a5a5a" stroke-width="3"/></svg>
        <span class="v v1">Perspective</span><span class="v v2">Top</span><span class="v v3">Front</span><span class="v v4">Right</span>
        <span class="layouts">Layouts...</span>
      </div>
      <div class="views">
        <div class="view">
          <svg viewBox="262 254 1010 648">
            <defs><linearGradient id="gTop" x1="0" y1="0" x2="0" y2="1"><stop offset="0" stop-color="#dfdfdf"/><stop offset="1" stop-color="#d3d3d1"/></linearGradient></defs>
            <path class="grid" d="M315.500 254V902M403 254V902M491 254V902M666.500 254V902M754.500 254V902M842 254V902M930 254V902M1017.500 254V902M1105.500 254V902M1193.500 254V902M262 294.500H1272M262 382.500H1272M262 470H1272M262 558H1272M262 645.500H1272M262 821.500H1272"/>
            <path class="axis0" d="M262 733H579M579 733V902"/>
            <path d="M578.500 254V733" stroke="#4b9a49" stroke-width="4"/><path d="M579 734.500H1272" stroke="#9a4b4b" stroke-width="4"/>
            <rect x="576.500" y="413.500" width="222.500" height="317" fill="url(#gTop)" stroke="#000" stroke-width="4" stroke-linejoin="round"/>
            <path d="M687.500 413V731M576 572H799" stroke="#000" stroke-width="2"/>
            <g class="solid"><text transform="matrix(1 0 0 1.040 633 626)">R</text><text transform="matrix(.980 0 0 1.040 685.500 626)">M</text></g>
            <path d="M640 600H680M659 574V607M690 601H738M714 605V626" stroke="#000" stroke-width="1.500"/>
            <path class="ucs" d="M333.500 770V830.500H394"/><text class="ax" x="343" y="772">y</text><text class="ax" x="403" y="832">x</text>
          </svg>
          <b class="tag cur">Top</b>
        </div>
        <div class="view">
          <svg viewBox="1276 254 1004 648">
            <defs>
              <linearGradient id="gPer" x1="0" y1="0" x2="0" y2="1"><stop offset="0" stop-color="#9d9d9e"/><stop offset="1" stop-color="#b4b4b5"/></linearGradient>
              <clipPath id="cR"><text class="big" transform="matrix(2.060 .400 -.665 2.038 1476 621.700)">R</text></clipPath>
              <clipPath id="cM"><text class="big" transform="matrix(2.180 .420 -.515 2.100 1639.500 653)">M</text></clipPath>
            </defs>
            <path class="grid" d="M1276 410L1400 442M2050 331L2278 369.500M2020 543L2278 590M1990 796L2278 855M2188 254L2131 902"/>
            <path d="M1437 254H2072L1983 902H1276V649Z" fill="url(#gPer)"/>
            <path d="M1437 254L1276 651M2072 254L1983 902" stroke="#000" stroke-width="4.200"/>
            <path d="M1754.700 254L1578.400 902M1360.400 445.700L2029.300 566" stroke="#000" stroke-width="2"/>
            <text class="big wall" transform="matrix(2.060 .400 -.665 2.038 1476 621.700)">R</text>
            <g clip-path="url(#cR)"><text class="big floor" transform="matrix(2.060 .400 -.665 2.038 1481 630.700)">R</text><path d="M1517 561L1622 581M1600 505L1570 600" class="iso"/></g>
            <text class="big edge" transform="matrix(2.060 .400 -.665 2.038 1476 621.700)">R</text>
            <text class="big wall" transform="matrix(2.180 .420 -.515 2.100 1639.500 653)">M</text>
            <g clip-path="url(#cM)"><text class="big floor" transform="matrix(2.180 .420 -.515 2.100 1641 661)">M</text><path d="M1675 593L1822 620M1745 619L1732 675" class="iso"/></g>
            <text class="big edge" transform="matrix(2.180 .420 -.515 2.100 1639.500 653)">M</text>
            <path class="ucs" d="M1348.500 802V830L1360.500 779M1348.500 830L1406.500 841"/><text class="ax" x="1369" y="781">y</text><text class="ax" x="1357" y="803">z</text><text class="ax" x="1416" y="843">x</text>
          </svg>
          <b class="tag">Perspective</b>
        </div>
        <div class="view">
          <svg viewBox="262 908 1010 712">
            <path class="grid" d="M643 908V1620"/>
            <rect x="262" y="1046" width="1010" height="93" fill="#dadada"/>
            <path d="M262 1046H1272M262 1139.500H1272" stroke="#000" stroke-width="4"/><path d="M262 1092.500H1272M823 1046V1139" stroke="#000" stroke-width="2"/>
            <path class="ucs" d="M334 1487V1548H394"/><text class="ax" x="343" y="1490">z</text><text class="ax" x="403" y="1550">x</text>
          </svg>
          <b class="tag">Front</b>
        </div>
        <div class="view">
          <svg viewBox="1276 908 1004 712">
            <defs>
              <pattern id="pMin" x="1778" y="1264" width="23.090" height="23.090" patternUnits="userSpaceOnUse"><path d="M0 -1V24M-1 0H24M23.090 -1V24M-1 23.090H24" stroke="#939aa4" stroke-width="2.400"/></pattern>
            </defs>
            <rect x="1276" y="908" width="1002" height="712" fill="url(#pMin)"/>
            <path class="axis0" d="M1316.500 908V1620M1547 908V1620M1778 1264V1620M2009 908V1620M2240 908V1620M1276 1033H2278M1276 1264H1778M1276 1494.500H2278"/>
            <path d="M1778 908V1264" stroke="#4b9a49" stroke-width="4"/><path d="M1778 1264.500H2278" stroke="#9a4b4b" stroke-width="4"/>
            <path d="M1780 1262.500H1861" stroke="#000" stroke-width="7" stroke-linecap="round"/>
            <path class="ucs" d="M1348 1488V1548H1408"/><text class="ax" x="1357" y="1490">z</text><text class="ax" x="1417" y="1550">y</text>
          </svg>
          <b class="tag">Right</b>
        </div>
      </div>
    </section>

    <aside class="right">
      <section class="panel p1">
        <div class="ptabs"><svg width="480" height="48"><use href="#ptabs"/></svg></div>
        <div class="row head"><span>Name</span><i></i><i></i><i></i><i></i><i></i><span>Linetype</span><i></i><span>P</span></div>
        <div class="list">
          <div class="row black"><span>Default</span><i class="rad on"></i><svg class="bulb dim"><use href="#bulb"/></svg><svg class="lock dim"><use href="#lock"/></svg><i class="sw"></i><svg class="mat"><use href="#mat"/></svg><span class="lt">Conti...<svg class="ud"><use href="#updn"/></svg></span><svg class="dia"><use href="#dia"/></svg><svg class="ud"><use href="#updn"/></svg></div>
          <div class="row red"><span>Layer 01</span><i class="rad"></i><svg class="bulb"><use href="#bulb"/></svg><svg class="lock"><use href="#lock"/></svg><i class="sw"></i><svg class="mat"><use href="#mat"/></svg><span class="lt">Conti...<svg class="ud"><use href="#updn"/></svg></span><svg class="dia"><use href="#dia"/></svg><svg class="ud"><use href="#updn"/></svg></div>
          <div class="row purple"><span>Layer 02</span><i class="rad"></i><svg class="bulb"><use href="#bulb"/></svg><svg class="lock"><use href="#lock"/></svg><i class="sw"></i><svg class="mat"><use href="#mat"/></svg><span class="lt">Conti...<svg class="ud"><use href="#updn"/></svg></span><svg class="dia"><use href="#dia"/></svg><svg class="ud"><use href="#updn"/></svg></div>
          <div class="row blue"><span>Layer 03</span><i class="rad"></i><svg class="bulb"><use href="#bulb"/></svg><svg class="lock"><use href="#lock"/></svg><i class="sw"></i><svg class="mat"><use href="#mat"/></svg><span class="lt">Conti...<svg class="ud"><use href="#updn"/></svg></span><svg class="dia"><use href="#dia"/></svg><svg class="ud"><use href="#updn"/></svg></div>
          <div class="row green"><span>Layer 04</span><i class="rad"></i><svg class="bulb"><use href="#bulb"/></svg><svg class="lock"><use href="#lock"/></svg><i class="sw"></i><svg class="mat"><use href="#mat"/></svg><span class="lt">Conti...<svg class="ud"><use href="#updn"/></svg></span><svg class="dia"><use href="#dia"/></svg><svg class="ud"><use href="#updn"/></svg></div>
          <div class="row white"><span>Layer 05</span><i class="rad"></i><svg class="bulb"><use href="#bulb"/></svg><svg class="lock"><use href="#lock"/></svg><i class="sw"></i><svg class="mat"><use href="#mat"/></svg><span class="lt">Conti...<svg class="ud"><use href="#updn"/></svg></span><svg class="dia"><use href="#dia"/></svg><svg class="ud"><use href="#updn"/></svg></div>
        </div>
        <div class="foot">
          <div class="btn pm"><svg width="90" height="30" viewBox="0 0 90 30"><path d="M13.500 15H35.500M24.500 4V26" stroke="#444" stroke-width="2"/><path d="M57.500 15H79.500" stroke="#ccc" stroke-width="2"/></svg></div>
          <div class="btn gr"><svg width="24" height="24"><use href="#gear"/></svg><svg width="16" height="12"><use href="#chev"/></svg></div>
        </div>
      </section>
      <section class="panel p2">
        <div class="ptabs"><svg width="480" height="48"><use href="#ptabs"/></svg></div>
        <div class="row head"><span>Name</span><i></i><i></i><i></i><i></i><i></i><span>Linetype</span><i></i><span>P</span></div>
        <div class="list">
          <div class="row black"><span>Default</span><i class="rad on"></i><svg class="bulb dim"><use href="#bulb"/></svg><svg class="lock dim"><use href="#lock"/></svg><i class="sw"></i><svg class="mat"><use href="#mat"/></svg><span class="lt">Conti...<svg class="ud"><use href="#updn"/></svg></span><svg class="dia"><use href="#dia"/></svg><svg class="ud"><use href="#updn"/></svg></div>
          <div class="row red"><span>Layer 01</span><i class="rad"></i><svg class="bulb"><use href="#bulb"/></svg><svg class="lock"><use href="#lock"/></svg><i class="sw"></i><svg class="mat"><use href="#mat"/></svg><span class="lt">Conti...<svg class="ud"><use href="#updn"/></svg></span><svg class="dia"><use href="#dia"/></svg><svg class="ud"><use href="#updn"/></svg></div>
          <div class="row purple"><span>Layer 02</span><i class="rad"></i><svg class="bulb"><use href="#bulb"/></svg><svg class="lock"><use href="#lock"/></svg><i class="sw"></i><svg class="mat"><use href="#mat"/></svg><span class="lt">Conti...<svg class="ud"><use href="#updn"/></svg></span><svg class="dia"><use href="#dia"/></svg><svg class="ud"><use href="#updn"/></svg></div>
          <div class="row blue"><span>Layer 03</span><i class="rad"></i><svg class="bulb"><use href="#bulb"/></svg><svg class="lock"><use href="#lock"/></svg><i class="sw"></i><svg class="mat"><use href="#mat"/></svg><span class="lt">Conti...<svg class="ud"><use href="#updn"/></svg></span><svg class="dia"><use href="#dia"/></svg><svg class="ud"><use href="#updn"/></svg></div>
          <div class="row green"><span>Layer 04</span><i class="rad"></i><svg class="bulb"><use href="#bulb"/></svg><svg class="lock"><use href="#lock"/></svg><i class="sw"></i><svg class="mat"><use href="#mat"/></svg><span class="lt">Conti...<svg class="ud"><use href="#updn"/></svg></span><svg class="dia"><use href="#dia"/></svg><svg class="ud"><use href="#updn"/></svg></div>
          <div class="row white"><span>Layer 05</span><i class="rad"></i><svg class="bulb"><use href="#bulb"/></svg><svg class="lock"><use href="#lock"/></svg><i class="sw"></i><svg class="mat"><use href="#mat"/></svg><span class="lt">Conti...<svg class="ud"><use href="#updn"/></svg></span><svg class="dia"><use href="#dia"/></svg><svg class="ud"><use href="#updn"/></svg></div>
        </div>
        <div class="foot">
          <div class="btn pm"><svg width="90" height="30" viewBox="0 0 90 30"><path d="M13.500 15H35.500M24.500 4V26" stroke="#444" stroke-width="2"/><path d="M57.500 15H79.500" stroke="#ccc" stroke-width="2"/></svg></div>
          <div class="btn gr"><svg width="24" height="24"><use href="#gear"/></svg><svg width="16" height="12"><use href="#chev"/></svg></div>
        </div>
      </section>
    </aside>
  </main>

  <footer class="status">
    <svg width="28" height="22" viewBox="0 0 28 22"><path d="M0 2H28M0 8H28M0 14H28M0 20H28" stroke="#777" stroke-width="2"/></svg>
    <span class="msg">File successfully written as /Users/davekennedy/Desktop/HCDE Courses/598 Fabrication/</span>
    <span class="units">Inches</span>
    <span class="plane">CPlane<svg width="14" height="24"><use href="#updn"/></svg></span>
    <span class="cx">X: 6.764</span><span class="cy">Y: -4.015</span><span class="cz">Z: 0.000</span>
  </footer>
</div>
</body>
</html>
```
FILE: styles.css
```css
* { box-sizing: border-box; }
body { margin: 0; width: 2880px; height: 1678px; overflow: hidden; font: 22px/1 Inter, "Liberation Sans", sans-serif; color: #222; }
i { font-style: normal; display: block; }
svg { display: block; flex: none; }
.defs { position: absolute; }
.window { display: flex; flex-direction: column; height: 1678px; background: linear-gradient(#e8e6e9, #d1cfd2 103px, #ececec 103px); border-bottom: 2px solid #4c4c4c; }

.titlebar { height: 26px; display: flex; padding-left: 16px; }
.lights { display: flex; gap: 16px; width: 1310px; }
.lights i { width: 24px; height: 24px; border-radius: 50%; border: 1px solid; }
.lights .red { background: #fc605b; border-color: #e0443f; }
.lights .yel { background: #fdbc40; border-color: #dfa023; }
.lights .grn { background: #34c84a; border-color: #25ab36; }
.doc { display: flex; align-items: center; font-size: 26px; letter-spacing: -.4px; color: #3a3a3a; margin-left: -12px; }
.doc span { margin: -1px 10px 0 12px; line-height: 26px; white-space: nowrap; }

.modebar { height: 77px; display: flex; align-items: center; padding: 2px 28px 0; }
.modes { display: flex; gap: 17px; margin-left: 108px; font-size: 24px; font-weight: 600; letter-spacing: .1px; color: #4a4a4a; }
.modes span { height: 30px; line-height: 30px; text-align: center; border-radius: 8px; }
.modes .on { background: #878687; color: #fff; }
.w165 { width: 165px; } .w115 { width: 115px; } .w123 { width: 123px; } .w186 { width: 186px; } .w144 { width: 144px; } .w133 { width: 133px; }
.layerpick { display: flex; align-items: center; margin-left: 583px; gap: 19px; }
.field { display: flex; align-items: center; width: 387px; height: 37px; margin-left: -2px; padding-left: 9px; border: 1px solid #c4c2c5; border-bottom: 2px solid #a8a7a9; border-radius: 8px; background: linear-gradient(#fff, #f1f1f1); }
.field i { width: 28px; height: 28px; background: #000; }
.field span { flex: 1; text-align: center; padding-right: 8px; color: #4a4a4a; }
.side-r { margin-left: auto; }

.tabs { height: 37px; display: flex; padding-left: 6px; background: #d6d6d6; border-top: 2px solid #a9a9a9; border-bottom: 2px solid #8e8e8e; font-size: 19px; font-weight: 600; letter-spacing: -.1px; color: #3f3f3f; text-shadow: 0 2px 1px #fff; }
.tabs span { height: 33px; line-height: 30px; text-align: center; border-top: 2px solid #919191; border-right: 2px solid #8a8a8a; border-radius: 0 7px 0 0; white-space: nowrap; }
.tabs .active { background: #ececec; height: 35px; border-left: 2px solid #8a8a8a; border-radius: 7px 7px 0 0; }
.t128 { width: 128px; } .t118 { width: 118px; } .t124 { width: 124px; } .t112 { width: 112px; } .t102 { width: 102px; } .t196 { width: 196px; } .t138 { width: 138px; } .t152 { width: 152px; } .t170 { width: 170px; } .t144 { width: 144px; } .t148 { width: 148px; } .t164 { width: 164px; } .t121 { width: 121px; }

.toolbar { height: 62px; display: flex; border-bottom: 2px solid #d0d0d0; background: #ebebeb; }
.toolbar svg, .tools svg { width: 60px; height: 60px; }
.wheel circle { fill: none; stroke-width: 8; stroke-dasharray: 7 72; }
.help { font: bold 34px "Liberation Serif", serif; fill: #fff; }

.body { display: flex; height: 1418px; }
.left { width: 262px; border-right: 2px solid #808080; background: #ececec; }
.strip { height: 52px; border-bottom: 2px solid #cfcfcf; background: linear-gradient(#f9f9f9, #e2e2e2); }
.cmd { width: 226px; height: 42px; margin: 21px 0 15px 17px; padding-left: 7px; border: 1px solid #b4b4b4; background: #fff; color: #c0c0c0; font-size: 26px; line-height: 45px; letter-spacing: -.5px; }
.tools { display: grid; grid-template-columns: repeat(4, 60px); height: 616px; align-content: start; }
.tee { font: bold 52px "Liberation Serif", serif; fill: #7c97f5; stroke: #000; stroke-width: 1.6px; }
.tee.shade { fill: #2d469e; }
.snaps { border-top: 3px solid #808080; padding-top: 9px; }
.radio, .chk { display: flex; align-items: center; height: 36px; padding: 1px 0 0 38px; gap: 8px; color: #222; }
.radio i { width: 28px; height: 28px; border-radius: 50%; background: #fff; border: 1px solid #b5b5b5; border-top-color: #999; }
.radio.on i, .rad.on { border: 0; background: radial-gradient(circle, #fff 4px, #3f99fb 5px); }
.chk { padding-left: 40px; gap: 10px; }
.chk.first { margin-top: 11px; }
.chk i { width: 24px; height: 24px; border-radius: 5px; background: #fff; border: 1px solid #b8b8b8; border-top: 2px solid #a5a5a5; }
.chk.on i { border: 0; background: #3f99fb; display: grid; place-items: center; }
.chk.on i::after { content: ""; width: 7px; height: 14px; border: solid #fff; border-width: 0 3px 3px 0; transform: translateY(-2px) rotate(40deg); }
.chk.off { color: #b2b2b2; }
.chk.off i { background: #f4f4f4; border-color: #cfcfcf; }

.center { width: 2020px; border-right: 2px solid #808080; }
.viewbar { height: 52px; display: flex; align-items: center; padding-left: 14px; border-bottom: 2px solid #808080; background: linear-gradient(#f9f9f9, #e0e0e0); font-size: 26px; letter-spacing: -.4px; color: #555; }
.viewbar svg { margin-right: 22px; }
.v { height: 28px; margin-top: 2px; line-height: 28px; border-left: 2px solid #777; text-align: center; }
.v1 { width: 223px; } .v2 { width: 125px; color: #1a82ff; } .v3 { width: 144px; } .v4 { width: 140px; }
.layouts { margin: 2px 0 0 auto; padding-right: 22px; color: #222; letter-spacing: -.9px; }
.views { display: grid; grid-template-columns: 1010px 1004px; grid-template-rows: 648px 712px; gap: 6px 4px; background: #d9d9d9; height: 1366px; }
.view { position: relative; background: #9ca3ab; overflow: hidden; }
.view svg { width: 100%; height: 100%; }
.tag { position: absolute; left: 2px; top: 2px; height: 40px; padding: 0 9px 0 7px; border: 2px solid #7e8081; background: rgba(138, 139, 140, .85); color: #fff; font-size: 24px; font-weight: 600; line-height: 40px; letter-spacing: -.1px; }
.tag.cur { background: #2f5f92; border-color: #1f5590; }
.grid { fill: none; stroke: #929aa3; stroke-width: 2.4; }
.axis0 { fill: none; stroke: #82858e; stroke-width: 2.4; }
.ucs { fill: none; stroke: #626264; stroke-width: 2; }
.ax { font-size: 24px; fill: #69696b; text-anchor: middle; }
.solid { font: bold 71.6px "Liberation Sans", sans-serif; fill: #dadad9; stroke: #000; stroke-width: 4px; stroke-linejoin: round; }
.big { font: bold 100px "Liberation Sans", sans-serif; }
.wall { fill: #777775; }
.floor { fill: #a8a8a9; stroke: #000; stroke-width: 1px; }
.edge { fill: none; stroke: #000; stroke-width: 2px; stroke-linejoin: round; }
.iso { stroke: #000; stroke-width: 2; }

.right { width: 598px; background: #fff; }
.panel { display: flex; flex-direction: column; }
.p1 { height: 719px; border-bottom: 3px solid #808080; }
.p2 { height: 699px; }
.ptabs { height: 52px; padding-left: 59px; border-bottom: 2px solid #d2d2d2; background: linear-gradient(#f9f9f9, #e0e0e0); }
.q { font: 800 45px "Noto Sans", sans-serif; fill: #4a4a4a; }
.row { display: grid; grid-template-columns: 162px 46px 46px 46px 60px 48px 114px 46px 26px; height: 34px; align-items: center; justify-items: center; color: #222; }
.row > span:first-child { justify-self: start; padding-left: 38px; }
.head { height: 44px; border-bottom: 2px solid #d4d4d4; color: #4a4a4a; flex: none; }
.head > * { height: 36px; width: 100%; border-left: 2px solid #e2e2e2; padding-left: 7px; line-height: 36px; }
.row.head > span:first-child { padding-left: 6px; border-color: transparent; }
.head > span:last-child { border-right: 2px solid #e2e2e2; padding-left: 6px; }
.list { flex: 1; }
.rad { width: 28px; height: 28px; border-radius: 50%; background: #fff; border: 1px solid #aaa; }
.bulb { width: 27px; height: 31px; } .lock { width: 30px; height: 32px; }
.dim { opacity: .4; }
.sw { width: 28px; height: 28px; border: 2px solid #000; background: currentColor; }
.mat { width: 24px; height: 26px; }
.ud { width: 14px; height: 24px; }
.dia { width: 32px; height: 32px; }
.lt { display: flex; align-items: center; justify-content: space-between; width: 114px; padding: 3px 6px 0 13px; }
.row > span { color: #222; }
.head > span { color: #4a4a4a; }
.black { color: #000; } .red { color: #ff2c1c; } .purple { color: #9148d6; } .blue { color: #0f3dff; } .green { color: #068c14; } .white { color: #fff; }
.foot { height: 66px; display: flex; padding: 13px 0 0 37px; gap: 34px; border-top: 2px solid #d2d2d2; background: #ececec; }
.btn { height: 34px; border: 1px solid #d0d0d0; border-bottom: 2px solid #b4b4b4; border-radius: 7px; background: linear-gradient(#fff, #f4f4f4); display: flex; align-items: center; }
.pm { width: 94px; }
.gr { width: 70px; padding: 0 6px 0 10px; justify-content: space-between; }

.status { height: 56px; display: flex; align-items: center; padding: 5px 0 0 9px; background: linear-gradient(#dadada, #d1d1d1); color: #000; white-space: nowrap; }
.msg { margin-left: 5px; width: 1863px; }
.units { width: 101px; color: #222; }
.plane { width: 140px; height: 32px; padding: 0 9px 0 12px; border: 2px solid #999; border-radius: 8px; display: flex; align-items: center; justify-content: space-between; color: #222; }
.cx { margin-left: 28px; width: 164px; } .cy { width: 171px; }
```
